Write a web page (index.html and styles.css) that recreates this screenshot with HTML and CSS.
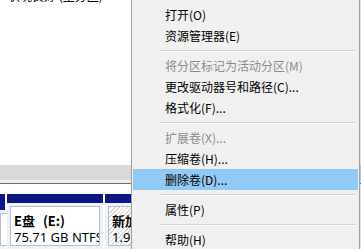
FILE: index.html
```html
<!DOCTYPE html>
<html lang="zh-CN">
<head>
    <meta charset="UTF-8">
    <title>磁盘管理</title>
    <link rel="stylesheet" href="styles.css">
</head>
<body>
    <div class="app">
        <div class="volumes">
            <div class="status">状况良好 (主分区)</div>
        </div>
        <div class="hscroll"></div>
        <div class="splitter"></div>
        <div class="disk">
            <div class="part part-prev">
                <div class="head"></div>
                <div class="body"><div class="box"></div></div>
            </div>
            <div class="part part-e">
                <div class="head"></div>
                <div class="body">
                    <div class="box">
                        <div class="name">E盘 <span class="drive">(E:)</span></div>
                        <div class="size">75.71 GB NTFS</div>
                    </div>
                </div>
            </div>
            <div class="part part-new">
                <div class="head"></div>
                <div class="body">
                    <div class="box hatch">
                        <div class="name">新加卷 <span class="drive">(F:)</span></div>
                        <div class="size">1.95 GB NTFS</div>
                    </div>
                </div>
            </div>
        </div>
    </div>

    <!-- 右键菜单 -->
    <ul class="menu">
        <li class="item">打开(O)</li>
        <li class="item">资源管理器(E)</li>
        <li class="sep"></li>
        <li class="item disabled">将分区标记为活动分区(M)</li>
        <li class="item">更改驱动器号和路径(C)...</li>
        <li class="item">格式化(F)...</li>
        <li class="sep"></li>
        <li class="item disabled">扩展卷(X)...</li>
        <li class="item">压缩卷(H)...</li>
        <li class="item active">删除卷(D)...</li>
        <li class="sep"></li>
        <li class="item">属性(P)</li>
        <li class="sep"></li>
        <li class="item">帮助(H)</li>
    </ul>
</body>
</html>
```

FILE: styles.css
```css
body {
    margin: 0;
    width: 361px;
    height: 249px;
    overflow: hidden;
    position: relative;
    background: #fff;
    font-family: "Noto Sans CJK SC", "Noto Sans", sans-serif;
    color: #000;
}
.app {
    display: flex;
    flex-direction: column;
    height: 249px;
}
.volumes {
    height: 165px;
    overflow: hidden;
}
.status {
    margin: -12px 0 0 8px;
    font-size: 12px;
    line-height: 16px;
}
.hscroll {
    height: 15px;
    background: #d9d9d9;
}
.splitter {
    height: 3px;
    background: #efefef;
    border-bottom: 1px solid #6e6e6e;
}
.disk {
    flex: 1;
    display: flex;
    gap: 2px;
    padding-top: 10px;
    min-height: 0;
}
.part {
    display: flex;
    flex-direction: column;
    flex-shrink: 0;
}
.part-prev { width: 5px; }
.part-e { width: 96px; }
.part-new { width: 120px; }
.head {
    height: 16px;
    background: #0b1784;
}
.body {
    flex: 1;
    padding: 3px;
    background: #eef1f5;
}
.part-prev .body {
    padding: 3px 0;
}
.box {
    height: 100%;
    box-sizing: border-box;
    background: #fff;
    border: 1px solid #b4bfce;
    padding: 6px 3px 0;
    overflow: hidden;
    white-space: nowrap;
    font-family: "Noto Sans", "Noto Sans CJK SC", sans-serif;
    font-size: 13px;
    line-height: 16px;
}
.box .name {
    font-weight: bold;
    font-family: "Noto Sans CJK SC", sans-serif;
}
.drive {
    margin-left: 5px;
}
.hatch {
    background: repeating-linear-gradient(-45deg, #fff 0 2px, #d8d8d8 2px 3px);
}

.menu {
    position: absolute;
    left: 131px;
    top: -17px;
    width: 229px;
    box-sizing: border-box;
    margin: 0;
    padding: 20px 1px 4px;
    list-style: none;
    background: #f0f0f0;
    border: 1px solid #a0a0a0;
    box-shadow: 1px 1px 2px rgba(0,0,0,0.18);
    font-size: 12px;
}
.item {
    height: 21px;
    line-height: 21px;
    padding-left: 32px;
    white-space: nowrap;
}
.item.disabled {
    color: #8d8d8d;
}
.item.active {
    background: #91c9f7;
}
.sep {
    height: 1px;
    margin: 4px 2px 3px 27px;
    background: #d3d3d3;
    border-bottom: 1px solid #fbfbfb;
}
```
